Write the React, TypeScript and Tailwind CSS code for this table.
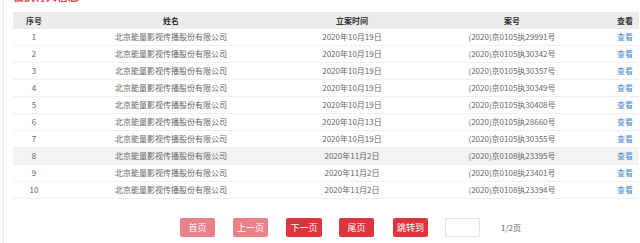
import React from "react";

const rows = [
  ["1", "2020年10月19日", "(2020)京0105执29991号"],
  ["2", "2020年10月19日", "(2020)京0105执30342号"],
  ["3", "2020年10月19日", "(2020)京0105执30357号"],
  ["4", "2020年10月19日", "(2020)京0105执30349号"],
  ["5", "2020年10月19日", "(2020)京0105执30408号"],
  ["6", "2020年10月13日", "(2020)京0105执28660号"],
  ["7", "2020年10月19日", "(2020)京0105执30355号"],
  ["8", "2020年11月2日", "(2020)京0108执23395号"],
  ["9", "2020年11月2日", "(2020)京0108执23401号"],
  ["10", "2020年11月2日", "(2020)京0108执23394号"],
];

const font = { fontFamily: '"Noto Sans CJK SC", "Noto Sans", sans-serif' };

export default function App() {
  return (
    <div className="w-[640px] h-[243px] overflow-hidden bg-white" style={font}>
      <div className="ml-[3px] h-[243px] border-l border-[#e8e8e8] pl-[8px]">
        <div className="h-[3px] overflow-hidden">
          <div className="-mt-[10px] h-[13px] pl-[1px] text-[11px] leading-[13px] font-bold text-[#e0404a]">
            被执行人信息
          </div>
        </div>
        <div className="mt-[9px] w-[626px] ml-[1px]">
          <div className="flex h-[17px] items-center bg-[#ececec] text-[8px] font-bold text-[#333]">
            <div className="w-[42px] text-center">序号</div>
            <div className="w-[232px] text-center">姓名</div>
            <div className="w-[130px] text-center">立案时间</div>
            <div className="w-[190px] text-center">案号</div>
            <div className="flex-1 text-right pr-[6px]">查看</div>
          </div>
          {rows.map((r, i) => (
            <div
              key={r[0]}
              className={`flex h-[17px] items-center border-b border-[#efefef] text-[8px] text-[#666] ${
                i === 7 ? "bg-[#f3f3f3]" : "bg-white"
              }`}
            >
              <div className="w-[42px] text-center">{r[0]}</div>
              <div className="w-[232px] text-center">北京能量影视传播股份有限公司</div>
              <div className="w-[130px] text-center">{r[1]}</div>
              <div className="w-[190px] text-center">{r[2]}</div>
              <div className="flex-1 text-right pr-[6px] text-[#4a8ad0]">查看</div>
            </div>
          ))}
        </div>
        <div className="mt-[19px] flex items-center pl-[168px] text-[9px]">
          <div className="flex h-[19px] w-[35px] items-center justify-center rounded-[2px] bg-[#ea8189] text-white">首页</div>
          <div className="ml-[18px] flex h-[19px] w-[35px] items-center justify-center rounded-[2px] bg-[#ea8189] text-white">上一页</div>
          <div className="ml-[18px] flex h-[19px] w-[36px] items-center justify-center rounded-[2px] bg-[#dc3540] text-white">下一页</div>
          <div className="ml-[17px] flex h-[19px] w-[35px] items-center justify-center rounded-[2px] bg-[#dc3540] text-white">尾页</div>
          <div className="ml-[19px] flex h-[19px] w-[35px] items-center justify-center rounded-[2px] bg-[#dc3540] text-white">跳转到</div>
          <div className="ml-[17px] h-[19px] w-[35px] rounded-[2px] border border-[#e3e3e3] bg-white"></div>
          <div className="ml-[21px] text-[8px] text-[#666]">1/2页</div>
        </div>
      </div>
    </div>
  );
}
